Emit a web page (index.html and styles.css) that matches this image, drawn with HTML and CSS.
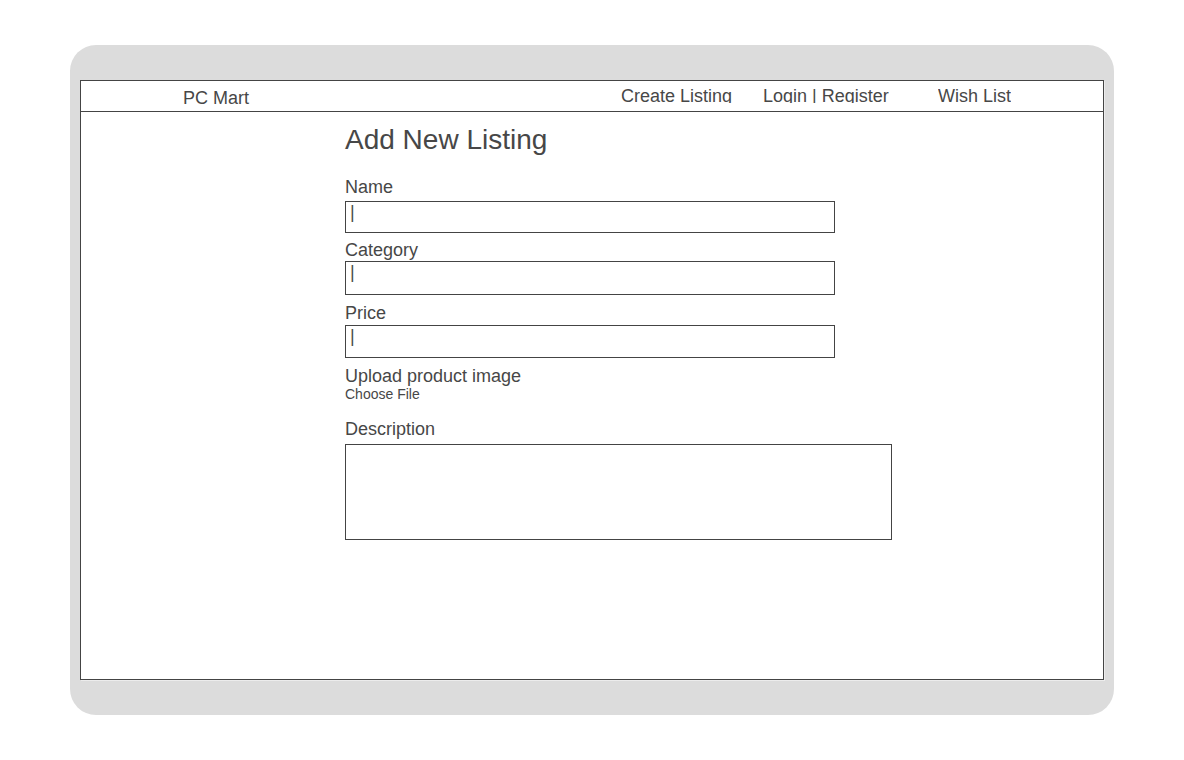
FILE: index.html
```html
<!DOCTYPE html>
<html lang="en">
<head>
<meta charset="utf-8">
<title>PC Mart - Add New Listing</title>
<link rel="stylesheet" href="styles.css">
</head>
<body>
<div class="frame">
  <div class="screen">
    <nav class="nav">
      <div class="brand">PC Mart</div>
      <div class="nav-link link-create">Create Listing</div>
      <div class="nav-link link-login">Login | Register</div>
      <div class="nav-link link-wish">Wish List</div>
    </nav>
    <main class="main">
      <h1 class="title">Add New Listing</h1>
      <div class="label label-name">Name</div>
      <div class="input input-name"><span class="caret">|</span></div>
      <div class="label label-category">Category</div>
      <div class="input input-category"><span class="caret">|</span></div>
      <div class="label label-price">Price</div>
      <div class="input input-price"><span class="caret">|</span></div>
      <div class="label label-upload">Upload product image</div>
      <div class="file">Choose File</div>
      <div class="label label-desc">Description</div>
      <div class="textarea"></div>
    </main>
  </div>
</div>
</body>
</html>
```
FILE: styles.css
```css
html, body {
  margin: 0;
  padding: 0;
  background: #fff;
}
body {
  font-family: "Liberation Sans", Arial, sans-serif;
  color: #474747;
  -webkit-font-smoothing: antialiased;
}
.frame {
  margin: 45px 0 0 70px;
  width: 1044px;
  height: 670px;
  box-sizing: border-box;
  padding: 35px 10px;
  background: #dcdcdc;
  border-radius: 26px;
}
.screen {
  height: 600px;
  box-sizing: border-box;
  border: 1px solid #444;
  background: #fff;
  box-shadow: 1px 1px 0 #ececec;
}
.nav {
  display: flex;
  align-items: flex-start;
  height: 31px;
  box-sizing: border-box;
  border-bottom: 1px solid #444;
  font-size: 18px;
  line-height: 20px;
}
.brand {
  margin-left: 102px;
  width: 438px;
  padding-top: 7px;
}
.nav-link {
  height: 22px;
  box-sizing: border-box;
  padding-top: 5px;
  overflow: hidden;
  white-space: nowrap;
}
.link-create { width: 142px; }
.link-login { width: 175px; }
.main {
  padding: 12px 0 0 264px;
}
.title {
  margin: 0;
  font-size: 28px;
  line-height: 32px;
  font-weight: normal;
}
.label {
  font-size: 18px;
  line-height: 20px;
}
.label-name { margin-top: 21px; }
.label-category { margin-top: 7px; }
.label-price { margin-top: 8px; }
.label-upload { margin-top: 8px; }
.label-desc { margin-top: 17px; }
.input {
  width: 490px;
  box-sizing: border-box;
  border: 1px solid #444;
  padding: 0 4px;
  font-size: 18px;
  line-height: 20px;
}
.caret {
  color: #4a4a4a;
}
.input-name { margin-top: 4px; height: 32px; }
.input-category { margin-top: 1px; height: 34px; }
.input-price { margin-top: 2px; height: 33px; }
.file {
  font-size: 14px;
  line-height: 16px;
}
.textarea {
  margin-top: 5px;
  width: 547px;
  height: 96px;
  box-sizing: border-box;
  border: 1px solid #444;
}
```
